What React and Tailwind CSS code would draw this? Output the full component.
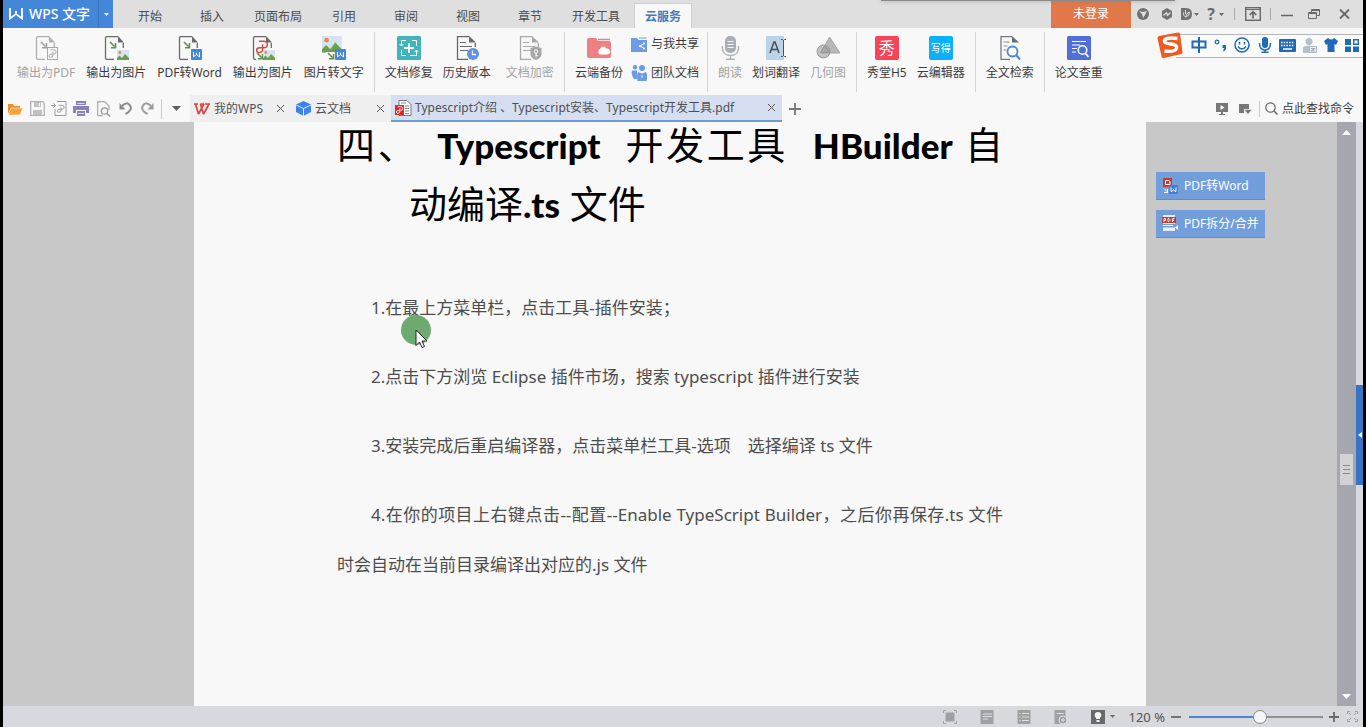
import React from 'react';

function Svg({ w = 24, h = 24, children, className = '' }) {
  return (
    <svg width={w} height={h} viewBox={`0 0 ${w} ${h}`} fill="none" className={`shrink-0 ${className}`} aria-hidden="true">
      {children}
    </svg>
  );
}

const Caret = ({ color = '#6b6b6e' }) => (
  <Svg w={5} h={3}><path d="M0 0h5L2.500 3z" fill={color} /></Svg>
);

const Page = ({ c = '#6a6a6a' }) => (
  <>
    <path d="M15 .7H3.500q-1 0-1 1v20.600q0 1 1 1H11M20.300 7v5" stroke={c} strokeWidth="1.300" />
    <path d="M15 0l6 6.500h-6z" fill={c} />
  </>
);

const Photo = ({ x = 13, y = 14, s = 1 }) => (
  <g transform={`translate(${x} ${y}) scale(${s})`}>
    <path d="M0 0h12v10H0z" fill="#d3e5f2" />
    <circle cx="2.800" cy="2.500" r="1.400" fill="#e88a4a" />
    <path d="M0 10V8l2.500-2.500L5 8l3-4 4 4v2z" fill="#6c9f4b" />
  </g>
);

const WBadge = ({ x = 14, y = 13 }) => (
  <g transform={`translate(${x} ${y})`}>
    <rect width="11" height="11" rx="1" fill="#4486d8" />
    <path d="M2.500 3v5l3-2.500 3 2.500V3M5.500 3.500v2" stroke="#fff" />
  </g>
);

const Arrow = ({ x = 7, y = 6, c = '#5c8f4c' }) => (
  <path transform={`translate(${x} ${y})`} d="M0 0l4.500 4.500M5.500 1v4.700H1" stroke={c} strokeWidth="1.500" />
);

const PSwirl = ({ x, y, c, s = 1 }) => (
  <path
    transform={`translate(${x} ${y}) scale(${s})`}
    d="M2.500 1H6.500Q9.500 1 9.500 3.700T6.500 6.500H5.500M5.500 3.500V7.500Q5.500 10.500 2.500 10.500Q.5 10.500.5 8.500T3 6.500H5.500"
    stroke={c}
    strokeWidth="1.200"
  />
);

const TextPage = ({ c = '#6a6a6a' }) => (
  <>
    <path d="M14 .7H2.500v22.600H13M20.300 7v4" stroke={c} strokeWidth="1.300" />
    <path d="M14 0l7 6.500h-7z" fill={c} />
    <path d="M5 6.500h6M5 10.500h12M5 14.500h8" stroke={c} strokeWidth="1.200" />
  </>
);

const icons = {
  toPdf: <Svg w={24}><Page c="#b0b0b0" /><Arrow c="#a0a0a0" /><rect x="13.500" y="11.500" width="10" height="12" fill="#f8f8f8" stroke="#a8a8a8" /><PSwirl x={14.500} y={13} c="#a8a8a8" s={0.8} /></Svg>,
  toImage: <Svg w={26}><Page /><Arrow /><Photo x={14} /></Svg>,
  pdfWord: <Svg w={25}><Page /><Arrow /><WBadge /></Svg>,
  pdfImage: <Svg><Page /><PSwirl x={5} y={4} c="#d0473e" s={1.200} /><path d="M5 18h8v6H5z" fill="#f8f8f8" /><Arrow x={6} y={17} /><Photo x={12} y={14} /></Svg>,
  imageText: <Svg w={26}><Photo x={1} y={0} s={1.650} /><path d="M5 16h20v8H5z" fill="#f8f8f8" /><Arrow x={7} y={17} /><WBadge x={14} y={13} /></Svg>,
  repair: <Svg><rect width="24" height="24" rx="1.500" fill="#41b5ba" /><path d="M9 4.500H4.500V10M2.500 8l2 2 2-2M13 19.500h7M19.500 14v5.500M17.500 16l2-2 2 2M4.500 14v5.500H9M15 4.500h4.500V10" stroke="#fff" /><path d="M12 7v10M7 12h10" stroke="#fff" strokeWidth="1.800" /></Svg>,
  history: <Svg><TextPage /><circle cx="18" cy="18" r="6" fill="#6591e2" /><path d="M17.500 14.500V18.500h3.500" stroke="#fff" strokeWidth="1.300" /></Svg>,
  encrypt: <Svg><TextPage c="#a9a9a9" /><path d="M12.500 12l5.500-1.500 5.500 1.500v6q0 4-5.500 6-5.500-2-5.500-6z" fill="#a6a6a6" /><circle cx="18" cy="15.500" r="1.700" stroke="#fff" /><path d="M18 17v4M18 19.500h1.500" stroke="#fff" /></Svg>,
  backup: <Svg><path d="M0 4q0-2 2-2h7l2 3h11q2 0 2 2v13q0 2-2 2H2q-2 0-2-2z" fill="#ee7f82" /><path d="M11 3.500h12" stroke="#ee7f82" strokeWidth="1.500" /><path d="M13 18.500a3 3 0 0 1 0-5.500 3.500 3.500 0 0 1 6.500-.5 3 3 0 0 1 1 6z" fill="#fff" /></Svg>,
  share: <Svg w={16} h={15}><path d="M0 1h6l1.500 2H16v12H0z" fill="#6c9be8" /><path d="M8 1h7.500" stroke="#6c9be8" /><path d="M13 6.500L9 9l4 2.500" stroke="#fff" /><circle cx="13" cy="6.500" r="1.100" fill="#fff" /><circle cx="9" cy="9" r="1.100" fill="#fff" /><circle cx="13" cy="11.500" r="1.100" fill="#fff" /></Svg>,
  team: <Svg w={16} h={16}><g fill="#6c9be8"><circle cx="4" cy="2.200" r="2.200" /><circle cx="11" cy="3" r="3" /><path d="M1 5.500h5v8.500H3q-3-3-2-8.500zM7 7l4 1.500L15 7q2 3 .5 9h-9Q5.500 10 7 7z" /></g><path d="M11 9l.7 3-.7 1-.7-1z" fill="#fff" /></Svg>,
  mic: <Svg><rect x="7" y="0" width="11" height="17" rx="5" fill="#a9adb5" /><path d="M9.500 5.500h6M9.500 8.500h6M9.500 11.500h6" stroke="#f8f8f8" /><path d="M4.500 10v3q1 6.500 8 6.500t8-6.500v-3M12.500 20v3M8 23.300h9" stroke="#b0b3b9" strokeWidth="1.500" /></Svg>,
  translate: <Svg><path d="M2 0h18v24H2z" fill="#bcd2e6" /><path d="M6 17l4-11h1l4 11M7.500 13.500h6" stroke="#474e57" strokeWidth="1.500" /><path d="M17 3.500h1.500l1 1 1-1H22M17 20.500h1.500l1-1 1 1H22M19.500 4v16" stroke="#4d5258" /></Svg>,
  shapes: <Svg><path d="M13.500 1L24 17H5z" fill="#b7b7b8" stroke="#a5a5a6" /><circle cx="7.500" cy="15.500" r="6.500" fill="#9f9fa0" fillOpacity=".6" stroke="#999" /><path d="M8.500 10l5 6.500H4.500z" fill="#aaa" stroke="#909090" strokeWidth=".7" /></Svg>,
  search: <Svg><path d="M14 .7H3v22.600h9" stroke="#77797e" strokeWidth="1.300" /><path d="M14 0l7 6.500h-7z" fill="#6a6c70" /><path d="M5.500 6h6M5.500 10h4M5.500 14h3" stroke="#8d8f94" /><circle cx="14.500" cy="15.500" r="5" stroke="#4c86dc" strokeWidth="1.800" fill="#fff" /><path d="M18 19l4 4.500" stroke="#4c86dc" strokeWidth="2" /></Svg>,
  check: <Svg><rect width="24" height="24" rx="1.500" fill="#506edb" /><path d="M5 5.500h14M5 9h8M5 12.500h5M5 16h4" stroke="#fff" /><circle cx="15.500" cy="14" r="4.300" stroke="#fff" strokeWidth="1.500" /><path d="M18.500 17.500l3 3.500" stroke="#fff" strokeWidth="1.700" /></Svg>,
};

function Tool({ icon, label, disabled }) {
  return (
    <button type="button" className={`flex flex-col items-center gap-1 whitespace-nowrap pt-1 ${disabled ? 'text-[#a3a3a3]' : 'text-[#3c3c3c]'}`}>
      {icon}
      <span className="leading-[18px]">{label}</span>
    </button>
  );
}

const Rule = () => <div className="h-[60px] w-px shrink-0 bg-[#d4d4d4]" />;

const Tile = ({ className, children }) => (
  <span className={`flex size-6 items-center justify-center whitespace-nowrap rounded-[2px] text-white ${className}`}>{children}</span>
);

const IconButton = ({ label, className = '', children }) => (
  <button type="button" aria-label={label} className={`flex shrink-0 items-center justify-center ${className}`}>{children}</button>
);

const Cross = ({ label }) => (
  <IconButton label={label} className="size-4">
    <Svg w={9} h={9}><path d="M1 1l7 7M8 1L1 8" stroke="#555" /></Svg>
  </IconButton>
);

function TitleBar() {
  const menus = ['开始', '插入', '页面布局', '引用', '审阅', '视图', '章节', '开发工具'];
  return (
    <header className="flex h-7 bg-[#dfdfe0]">
      <button type="button" className="flex w-[95px] shrink-0 items-center gap-[6px] whitespace-nowrap bg-[#4486d8] pl-[6px] text-[14px] font-medium text-white">
        <Svg w={14} h={12}><path d="M1 0v10.500L7 6l6 4.500V0M7 3v4" stroke="#fff" strokeWidth="1.800" /></Svg>
        WPS 文字
      </button>
      <IconButton label="应用菜单" className="w-[15px] border-l border-[#3a78c4] bg-[#4486d8]"><Caret color="#fff" /></IconButton>
      <nav className="ml-[6px] flex shrink-0 text-[#4b4b4b]">
        {menus.map((m) => (
          <button key={m} type="button" className="min-w-[62px] px-[11px] pt-[6px]">{m}</button>
        ))}
        <button type="button" className="ml-[3px] mt-[3px] w-[58px] border border-b-0 border-[#cfcfcf] bg-[#f8f8f8] pt-[2px] font-bold text-[#3f7bc4]">云服务</button>
      </nav>
      <div className="ml-auto flex shrink-0 items-center">
        <button type="button" className="h-7 w-20 bg-[#e07849] text-white">未登录</button>
        <IconButton label="皮肤" className="w-6"><Svg w={12} h={12}><circle cx="6" cy="6" r="6" fill="#727274" /><path d="M2 3l4 1 4-1-2 4-2 3-1-4z" fill="#dfdfe0" /></Svg></IconButton>
        <IconButton label="消息" className="w-[23px]"><Svg w={12} h={12}><path d="M6 0l5 3v6l-5 3-5-3V3z" fill="#727274" /><path d="M2.500 7.500l3-3 1 3 3-3" stroke="#dfdfe0" strokeWidth="1.200" /></Svg></IconButton>
        <IconButton label="文档服务" className="w-6 gap-[2px]"><Svg w={11} h={12}><path d="M0 0h5q6 0 6 6t-6 6H0z" fill="#727274" /><path d="M2.500 4.500q0 4.500 2.500 4.500 3.500-1 3.500-5Q5 5 5 9M4.500 2v4" stroke="#dfdfe0" /></Svg><Caret /></IconButton>
        <button type="button" aria-label="帮助" className="flex w-[27px] items-center justify-center gap-[4px] text-base font-bold text-[#6b6b6e]">?<Caret /></button>
        <div className="ml-[5px] h-3 w-px bg-[#a8a8aa]" />
        <IconButton label="收起功能区" className="w-[35px]"><Svg w={16} h={14}><rect x=".7" y=".7" width="14.600" height="12.600" stroke="#68686b" strokeWidth="1.400" /><path d="M1 2.500h14" stroke="#68686b" /><path d="M8 11.500V5.500M4.700 8L8 4.800 11.300 8" stroke="#68686b" strokeWidth="1.700" /></Svg></IconButton>
        <div className="h-3 w-px bg-[#a8a8aa]" />
        <IconButton label="最小化" className="w-8"><Svg w={12} h={12}><path d="M0 7.500h12" stroke="#68686b" strokeWidth="1.500" /></Svg></IconButton>
        <IconButton label="还原" className="w-[22px]"><Svg w={12} h={10}><path d="M.5 3.500h8v6h-8zM.5 4.500h8M3.500 3V.5h8v6H9M3.500 1.500h8" stroke="#68686b" /></Svg></IconButton>
        <IconButton label="关闭" className="w-[38px]"><Svg w={11} h={10}><path d="M1 .5l9 9M10 .5l-9 9" stroke="#68686b" strokeWidth="1.900" /></Svg></IconButton>
      </div>
    </header>
  );
}

function Ribbon() {
  return (
    <div className="flex gap-[10px] pb-[3px] pl-[14px] pt-1">
      <div className="flex gap-[11px]">
        <Tool icon={icons.toPdf} label="输出为PDF" disabled />
        <Tool icon={icons.toImage} label="输出为图片" />
        <Tool icon={icons.pdfWord} label="PDF转Word" />
        <Tool icon={icons.pdfImage} label="输出为图片" />
        <Tool icon={icons.imageText} label="图片转文字" />
      </div>
      <Rule />
      <Tool icon={icons.repair} label="文档修复" />
      <Tool icon={icons.history} label="历史版本" />
      <div className="flex pl-[5px]"><Tool icon={icons.encrypt} label="文档加密" disabled /></div>
      <Rule />
      <Tool icon={icons.backup} label="云端备份" />
      <div className="-mx-[2px] flex flex-col gap-[11px] pt-[3px] text-[#3c3c3c]">
        <button type="button" className="flex items-center gap-1 whitespace-nowrap leading-[18px]">{icons.share}与我共享</button>
        <button type="button" className="flex items-center gap-1 whitespace-nowrap leading-[18px]">{icons.team}团队文档</button>
      </div>
      <Rule />
      <Tool icon={icons.mic} label="朗读" disabled />
      <Tool icon={icons.translate} label="划词翻译" />
      <Tool icon={icons.shapes} label="几何图" disabled />
      <Rule />
      <Tool icon={<Tile className="bg-[#f94458] text-[16px]">秀</Tile>} label="秀堂H5" />
      <Tool icon={<Tile className="bg-[#0ab0fb] text-[10px]">写得</Tile>} label="云编辑器" />
      <Rule />
      <Tool icon={icons.search} label="全文检索" />
      <Rule />
      <Tool icon={icons.check} label="论文查重" />
    </div>
  );
}

function QuickBar() {
  return (
    <div className="flex h-[27px] items-center text-[#505052]">
      <div className="flex shrink-0 items-center gap-[6px] pl-1">
        <IconButton label="打开" className="w-4"><Svg w={16} h={14}><path d="M1 12V2h5l1 2h6v3H4z" fill="#f28a2a" /><path d="M4 6h12l-3 7H1z" fill="#f9a03f" stroke="#fff" strokeWidth=".6" /></Svg></IconButton>
        <IconButton label="保存" className="w-4"><Svg w={15} h={15}><path d="M.7.700h12l1.600 1.600v12H.700z" stroke="#b3b3b3" strokeWidth="1.300" /><path d="M4 1h7v5H4zM3 9h9v5H3z" fill="#c1c1c1" /><path d="M9 2h1v3H9z" fill="#fff" /></Svg></IconButton>
        <IconButton label="输出为PDF" className="w-4"><Svg w={16} h={15}><path d="M6 .5h9v14H4V8" stroke="#999" /><path d="M0 4.500h4M2.500 2.500l2 2-2 2" stroke="#999" /><PSwirl x={6} y={3.500} c="#999" s={0.75} /></Svg></IconButton>
        <IconButton label="打印" className="w-4"><Svg w={16} h={15}><path d="M3 0h10v4H3zM0 5h16v7h-3V9H3v3H0zM4 10h8v5H4z" fill="#8782bd" /><path d="M4.500 2.500h7M5 12.500h6" stroke="#dedcf1" /></Svg></IconButton>
        <IconButton label="打印预览" className="w-4"><Svg w={15} h={16}><path d="M9 .7H1.700v14h5M9 .7L13 5v4" stroke="#aaa" strokeWidth="1.200" /><circle cx="8.500" cy="10" r="3.200" stroke="#999" strokeWidth="1.300" /><path d="M11 12.500l3 3" stroke="#999" strokeWidth="1.500" /></Svg></IconButton>
        <IconButton label="撤销" className="w-4"><Svg w={13} h={13}><path d="M3 4q5-5 8-.5T6.500 12" stroke="#8b8b8d" strokeWidth="2" /><path d="M.5 1v6.500h6z" fill="#8b8b8d" /></Svg></IconButton>
        <IconButton label="恢复" className="w-4"><Svg w={13} h={13}><path d="M10 4q-5-5-8-.5T6.500 12" stroke="#9c9c9e" strokeWidth="2" /><path d="M12.500 1v6.500h-6z" fill="#9c9c9e" /></Svg></IconButton>
        <div className="h-5 w-px bg-[#cacacb]" />
      </div>
      <IconButton label="自定义" className="w-[28px]"><Svg w={9} h={5}><path d="M0 0h9L4.500 5z" fill="#5e5e60" /></Svg></IconButton>
      <div className="flex h-full shrink-0 items-center bg-[#efeff0]">
        <a href="#wps" className="flex items-center gap-1 whitespace-nowrap pl-1">
          <Svg w={16} h={12}><path d="M1.500 1l3 10L10 1H6.500l3 10L15 1" stroke="#e4403c" strokeWidth="1.700" strokeLinejoin="bevel" /><path d="M0 1h4M11 1h5" stroke="#e4403c" strokeWidth="1.500" /></Svg>
          我的WPS
        </a>
        <span className="ml-[9px] mr-2 flex"><Cross label="关闭我的WPS" /></span>
        <a href="#cloud" className="flex items-center gap-1 whitespace-nowrap">
          <Svg w={15} h={15}><path d="M7.500 0L15 3.500v7.500l-7.500 4L0 11V3.500z" fill="#3f84e8" /><path d="M0 4l7.500 3.500L15 4M7.500 7.500V15" stroke="#dceaff" /></Svg>
          云文档
        </a>
        <span className="ml-[21px] mr-[3px] flex"><Cross label="关闭云文档" /></span>
      </div>
      <div className="flex h-full shrink-0 items-center border-b-2 border-[#6f9bd6] bg-[#d6dff1] pl-1">
        <a href="#pdf" className="flex items-center gap-[3px] whitespace-nowrap">
          <Svg w={17} h={16}><path d="M4 .5h8l4 4v11H4z" fill="#fff" stroke="#777" /><path d="M6 3h5M10 6h4M10 8.500h4M10 11h4M10 13.500h4" stroke="#888" /><path d="M0 5h9v10H0z" fill="#dc2722" /><PSwirl x={1} y={6} c="#fff" s={0.700} /></Svg>
          <span>Typescript介绍 、Typescript安装、Typescript开发工具.pdf</span>
        </a>
        <span className="ml-[29px] mr-[3px] flex"><Cross label="关闭文档" /></span>
      </div>
      <IconButton label="新建标签" className="w-[26px]"><Svg w={12} h={12}><path d="M6 0v12M0 6h12" stroke="#77777a" strokeWidth="1.800" /></Svg></IconButton>
      <div className="ml-auto flex shrink-0 items-center pr-[9px]">
        <IconButton label="播放" className="w-6"><Svg w={12} h={12}><path d="M0 0h12v9H0zM3 11h6v1H3zM5 9h2v2H5z" fill="#77777a" /><path d="M4.500 2l4 2.500-4 2.500z" fill="#fff" /></Svg></IconButton>
        <IconButton label="更多窗口" className="w-6"><Svg w={13} h={12}><path d="M0 1h10v5H5v4H0z" fill="#77777a" /><path d="M5 6.500h8l-4 5z" fill="#77777a" stroke="#f8f8f8" strokeWidth=".6" /></Svg></IconButton>
        <div className="mx-[1px] h-4 w-px bg-[#cacacb]" />
        <button type="button" className="flex items-center gap-1 whitespace-nowrap pl-1 text-[#3c3c3c]">
          <Svg w={13} h={13}><circle cx="5.500" cy="5.500" r="4.700" stroke="#666" strokeWidth="1.200" /><path d="M9 9l3.500 3.500" stroke="#666" strokeWidth="1.400" /></Svg>
          点此查找命令
        </button>
      </div>
    </div>
  );
}

function InputMethodBar() {
  return (
    <div className="absolute right-0 top-[30px] flex h-[30px] w-[207px] items-center">
      <div className="absolute left-5 right-0 top-1 h-6 border-y border-[#b5b5b6] bg-[#fbfbfb]" />
      <div className="relative flex w-full items-center justify-between pr-1">
        <Svg w={28} h={28}><path d="M3 5L22 1.500q1.500 0 2 1l2.500 19q0 1-1 1.500L7.500 27q-1.500 0-2-1.500L1.500 7Q1.500 5.500 3 5z" fill="#f0591f" /><path d="M21.500 7.500q-10-1.500-13 1.500-1 3.500 6 4t6 4.500q-2 4-12 2.500" stroke="#fff" strokeWidth="3.300" /></Svg>
        <Svg w={16} h={16}><path d="M1.500 4.500h13v6h-13zM8 0v16" stroke="#1f69b5" strokeWidth="2" /></Svg>
        <Svg w={13} h={14}><circle cx="3" cy="4" r="1.800" stroke="#1f69b5" strokeWidth="1.200" /><path d="M8.500 7h3.500v3q0 2.500-3 3.500l1-3.500H8.500z" fill="#1f69b5" /></Svg>
        <Svg w={16} h={16}><circle cx="8" cy="8" r="7" stroke="#1f69b5" strokeWidth="1.500" /><path d="M5.500 5v2.500M10.500 5v2.500M4 9.500q4 5 8 0" stroke="#1f69b5" strokeWidth="1.500" /></Svg>
        <Svg w={14} h={16}><rect x="4" width="6" height="11" rx="3" fill="#1f69b5" /><path d="M1.500 6q0 7 5.500 7t5.500-7M7 13v3M3.500 15.300h7" stroke="#1f69b5" strokeWidth="1.500" /></Svg>
        <Svg w={17} h={13}><rect width="17" height="13" rx="1" fill="#1f69b5" /><path d="M2 3.500h13M2 6.500h13" stroke="#fff" strokeWidth="1.500" strokeDasharray="1.500 1.200" /><path d="M4 10h9" stroke="#fff" strokeWidth="1.500" /></Svg>
        <Svg w={14} h={15}><g fill="#b6bfcc"><circle cx="6" cy="3.500" r="3.500" /><path d="M0 15V9q6-3 11 0v6z" /></g><path d="M6.500 8.500h7v6h-7z" fill="#edf0f4" stroke="#aeb7c4" /><path d="M8 10.500h4l-4 2.500h4" stroke="#9da8b8" /></Svg>
        <Svg w={14} h={14}><path d="M4 0q3 3 6 0l4 3-2 4-1.500-1V14h-7V6L2 7 0 3z" fill="#1f69b5" /></Svg>
        <Svg w={14} h={13}><path d="M0 0h6v6H0zM0 7.500h6V13H0zM8 7.500h6V13H8z" fill="#1f69b5" /><path d="M8.700.700h4.600v4.600H8.700z" stroke="#1f69b5" strokeWidth="1.400" /></Svg>
      </div>
    </div>
  );
}

function DocumentPage() {
  return (
    <article className="relative w-[952px] shrink-0 bg-[#f8f8f8] px-[143px]">
      <h1 className="font-[Lato,'Noto_Sans_CJK_SC',sans-serif] text-[38px] text-black">
        <span className="block text-justify leading-[44px] [text-align-last:justify]">
          四、&ensp;<b className="text-[35px] font-black">Typescript</b>&nbsp; 开发工具&nbsp; <b className="text-[35px] font-black">HBuilder</b> 自
        </span>
        <span className="block pl-[72px] pt-2 leading-[56px]">动编译<b className="text-[35px] font-black">.ts</b> 文件</span>
      </h1>
      <div className="mt-[51px] flex flex-col gap-[19px] text-justify indent-[34px] text-[17px] leading-[50px] text-[#4d4d4d]">
        <p>1.在最上方菜单栏，点击工具-插件安装；</p>
        <p>2.点击下方浏览 Eclipse 插件市场，搜索 typescript 插件进行安装</p>
        <p>3.安装完成后重启编译器，点击菜单栏工具-选项　选择编译 ts 文件</p>
        <p>4.在你的项目上右键点击--配置--Enable TypeScript Builder，之后你再保存.ts 文件时会自动在当前目录编译出对应的.js 文件</p>
      </div>
      <div className="absolute left-[207px] top-[193px] size-[30px] rounded-full bg-[#6daa72]">
        <Svg w={14} h={20} className="absolute left-[14px] top-[14px]"><path d="M1 1v15.500l3.500-3.500 2.500 5.500 2.500-1L7 12h5z" fill="#fff" stroke="#222" /></Svg>
      </div>
    </article>
  );
}

function Workspace() {
  return (
    <main className="flex flex-1 bg-[#c8c8c8]">
      <div className="flex-1" />
      <DocumentPage />
      <aside className="flex-1 text-white">
        <div className="flex flex-col items-start gap-[10px] pl-[10px] pt-[50px]">
          <button type="button" className="flex h-7 w-[109px] items-center gap-[6px] whitespace-nowrap border-b border-[#5f8dcb] bg-[#729fdc] pl-[7px]">
            <Svg w={15} h={16}><path d="M0 0h9v9H0z" fill="#c43d33" /><path d="M2.500 2.500h3l1.500 1v3h-4.500z" stroke="#fff" /><path d="M6 7h9v9H6z" fill="#3c82d5" /><path d="M8 9.500v4h1l1.500-2 1.500 2h1v-4" stroke="#fff" /><path d="M1 10.500l3 3M4.500 11v3.500H1" stroke="#fff" /></Svg>
            PDF转Word
          </button>
          <button type="button" className="flex h-7 w-[109px] items-center gap-[5px] whitespace-nowrap border-b border-[#5f8dcb] bg-[#729fdc] pl-[6px]">
            <Svg w={17} h={17}><path d="M1 0h12v9H1zM1 12.500h12V16H1z" fill="#e8eef8" /><path d="M0 2h14v6H0z" fill="#c43d33" /><path d="M2 7V3.500h1.500v2H2M6 3.500h1l1 1v1l-1 1H6zM10.500 7V3.500h2M10.500 5.300h1.500M1 10.500h10" stroke="#fff" strokeWidth=".9" /><path d="M16 10v5l-3-2.500z" fill="#fff" /></Svg>
            PDF拆分/合并
          </button>
        </div>
      </aside>
      <div className="flex w-[19px] shrink-0 flex-col items-center bg-[#a6a6ae]">
        <IconButton label="向上滚动" className="h-5 w-full"><Svg w={9} h={5}><path d="M0 5h9L4.500 0z" fill="#fff" /></Svg></IconButton>
        <div className="flex-[312] basis-0" />
        <div className="flex h-[31px] w-[13px] flex-col items-center justify-center gap-[3px] bg-[#d3d3d5]">
          <div className="h-px w-[7px] bg-[#88888c]" />
          <div className="h-px w-[7px] bg-[#88888c]" />
          <div className="h-px w-[7px] bg-[#88888c]" />
        </div>
        <div className="flex-[201] basis-0" />
        <IconButton label="向下滚动" className="h-5 w-full"><Svg w={9} h={5}><path d="M0 0h9L4.500 5z" fill="#fff" /></Svg></IconButton>
      </div>
      <div className="flex w-[7px] shrink-0 flex-col bg-[#d8d8e1]">
        <div className="flex-[263] basis-0" />
        <IconButton label="展开侧栏" className="h-[100px] w-full bg-[#3873c6]"><Svg w={4} h={6}><path d="M4 0v6L0 3z" fill="#fff" /></Svg></IconButton>
        <div className="flex-[221] basis-0" />
      </div>
    </main>
  );
}

function StatusBar() {
  return (
    <footer className="flex h-[21px] items-center justify-end bg-[#d8d8df] pr-[5px] text-[#555]">
      <div className="flex items-center gap-[23px]">
        <IconButton label="全屏显示"><Svg w={14} h={14}><path d="M2.500 2.500h9v9h-9z" fill="#a0a0a2" /><path d="M.5 3V.5H3M11 .5h2.500V3M13.500 11v2.500H11M3 13.500H.5V11" stroke="#a0a0a2" /></Svg></IconButton>
        <IconButton label="页面视图"><Svg w={14} h={14}><path d="M.5 0h13v14H.5z" fill="#a0a0a2" /><path d="M3 4h9M3 6.500h9M3 9h5" stroke="#e0e0e5" /></Svg></IconButton>
        <IconButton label="大纲视图"><Svg w={14} h={14}><path d="M.5 0h13v14H.5z" fill="#a0a0a2" /><path d="M5 3.500h7M5 7h7M5 10.500h7M2.500 3.500h1M2.500 7h1M2.500 10.500h1" stroke="#e0e0e5" /></Svg></IconButton>
        <IconButton label="网页视图"><Svg w={14} h={14}><path d="M.5 0h11v14H.5z" fill="#a0a0a2" /><path d="M2.500 3.500h7" stroke="#e0e0e5" /><circle cx="9" cy="10" r="4" fill="#a0a0a2" stroke="#e0e0e5" /><path d="M7 10h4M9 8v4" stroke="#e0e0e5" /></Svg></IconButton>
        <IconButton label="护眼模式" className="gap-[5px]"><Svg w={14} h={14}><path d="M0 0h14v14H0z" fill="#69696c" /><path d="M7 2a3.300 3.300 0 0 0-2 6v1h4V8a3.300 3.300 0 0 0-2-6zM5.500 10h3v2h-3z" fill="#f4f4f6" /></Svg><Caret /></IconButton>
      </div>
      <span className="ml-[14px] whitespace-nowrap text-[13px]">120 %</span>
      <IconButton label="缩小" className="ml-[6px] w-[10px]"><Svg w={10} h={10}><path d="M0 5h10" stroke="#69696c" strokeWidth="1.800" /></Svg></IconButton>
      <input
        type="range"
        aria-label="显示比例"
        min="0"
        max="100"
        defaultValue="53"
        className="ml-2 mr-[6px] h-[14px] w-[134px] appearance-none bg-transparent [&::-webkit-slider-runnable-track]:h-[2px] [&::-webkit-slider-runnable-track]:bg-[linear-gradient(to_right,#4a86d3_53%,#8e8e93_53%)] [&::-webkit-slider-thumb]:-mt-[6px] [&::-webkit-slider-thumb]:size-[14px] [&::-webkit-slider-thumb]:appearance-none [&::-webkit-slider-thumb]:rounded-full [&::-webkit-slider-thumb]:border [&::-webkit-slider-thumb]:border-[#88888c] [&::-webkit-slider-thumb]:bg-[#f6f6f6]"
      />
      <IconButton label="放大" className="w-[10px]"><Svg w={10} h={10}><path d="M0 5h10M5 0v10" stroke="#69696c" strokeWidth="1.800" /></Svg></IconButton>
      <IconButton label="适应窗口" className="ml-2 w-[11px]"><Svg w={11} h={11}><path d="M.5 3V.5H3M8 .5h2.500V3M10.500 8v2.500H8M3 10.500H.5V8M2 2l2 2M9 2L7 4M9 9L7 7M2 9l2-2" stroke="#9b9ba0" /></Svg></IconButton>
    </footer>
  );
}

export default function App() {
  return (
    <div className="relative flex min-h-screen flex-col overflow-hidden border-x-[3px] border-black bg-[#f8f8f8] font-['Noto_Sans','Noto_Sans_CJK_SC',sans-serif] text-[12px] leading-[18px]">
      <TitleBar />
      <Ribbon />
      <QuickBar />
      <Workspace />
      <StatusBar />
      <InputMethodBar />
      <div className="absolute right-[188px] top-0 h-px w-[294px] bg-[#8a8a8a] shadow-[0_0_4px_#777]" />
    </div>
  );
}
